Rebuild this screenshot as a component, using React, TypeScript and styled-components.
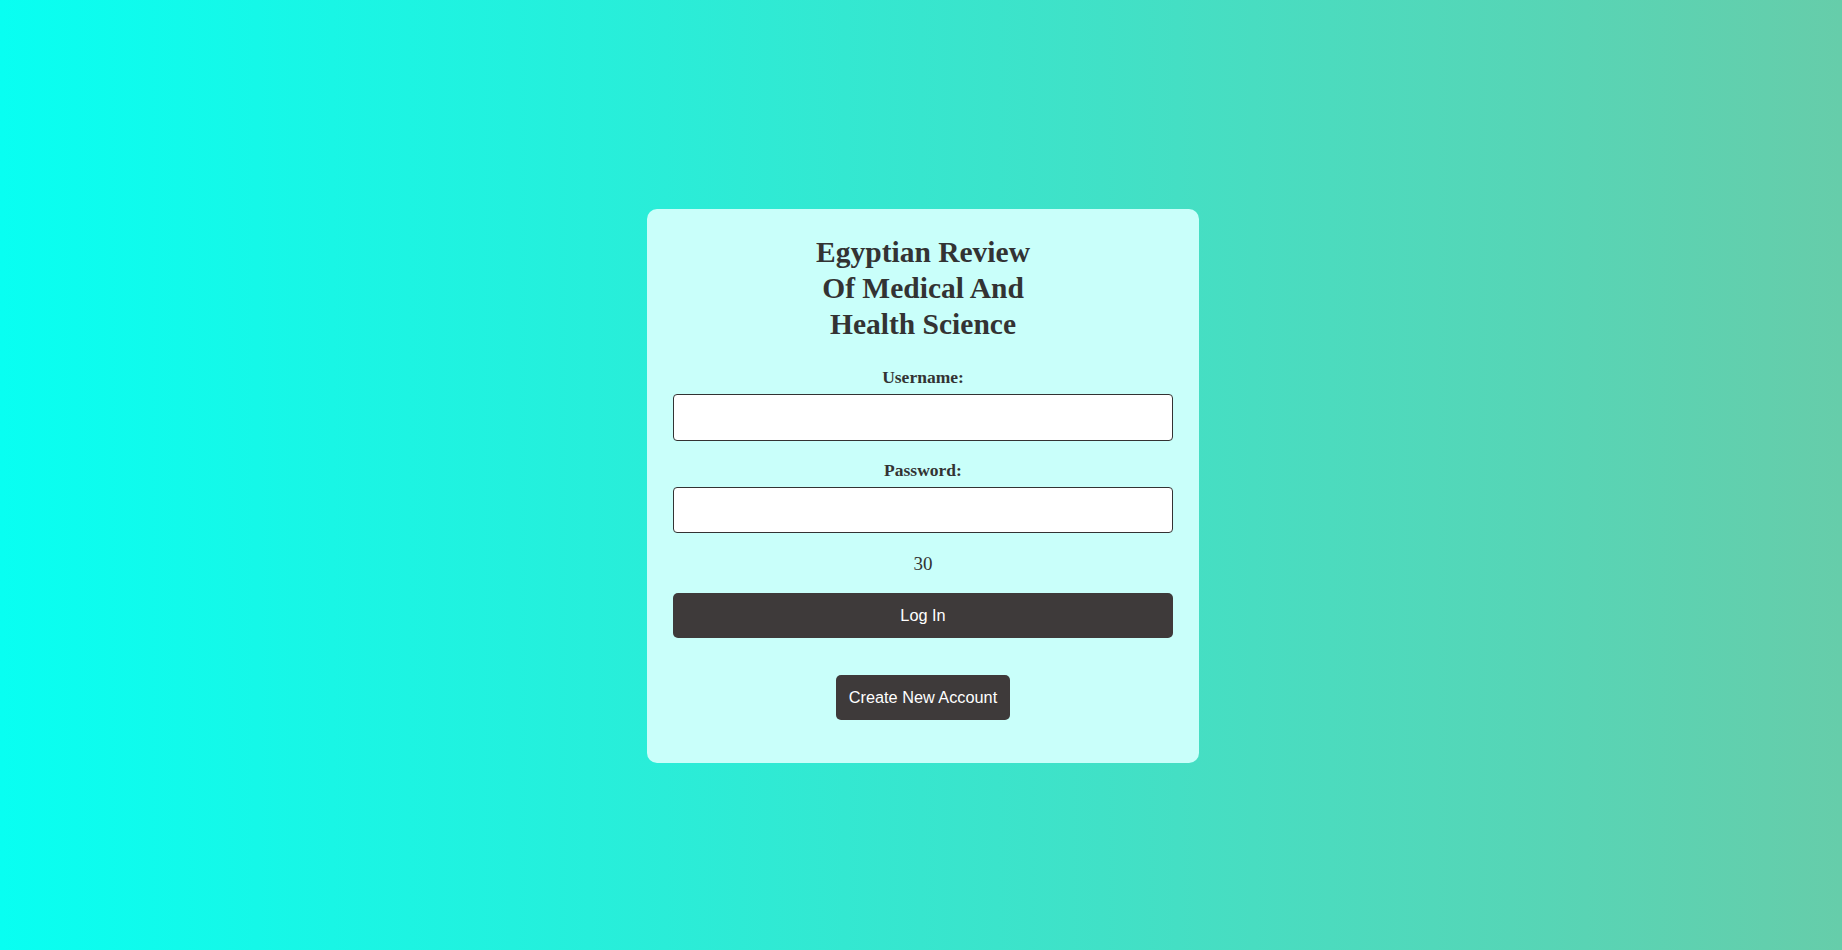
import React from "react";
import styled, { createGlobalStyle } from "styled-components";

const GlobalStyle = createGlobalStyle`
  * { box-sizing: border-box; }
  html, body { margin: 0; padding: 0; }
  body {
    font-family: "Liberation Serif", "Times New Roman", serif;
    color: #333;
  }
`;

const Page = styled.main`
  min-height: 100vh;
  display: flex;
  align-items: center;
  justify-content: center;
  padding: 22.5px 0 0 4px;
  background: linear-gradient(to right, #08fff2, #66cdaa);
`;

const Card = styled.form`
  width: 552px;
  background: #c9fffa;
  border-radius: 10px;
  padding: 25px 26px 43px;
  display: flex;
  flex-direction: column;
  align-items: stretch;
`;

const Title = styled.h1`
  margin: 0 auto;
  max-width: 240px;
  text-align: center;
  font-family: "Liberation Serif", "Times New Roman", serif;
  font-weight: bold;
  font-size: 29.5px;
  line-height: 36px;
  color: #333;
`;

const Field = styled.div<{ $top: number }>`
  display: flex;
  flex-direction: column;
  align-items: stretch;
  gap: 7px;
  margin-top: ${(p) => p.$top}px;
`;

const Label = styled.label`
  text-align: center;
  font-weight: bold;
  font-size: 17.5px;
  line-height: 20px;
  color: #333;
`;

const Input = styled.input<{ $h: number }>`
  height: ${(p) => p.$h}px;
  width: 100%;
  background: #fff;
  border: 1px solid #333;
  border-radius: 4px;
  padding: 0 10px;
  font-size: 16px;
  outline: none;
`;

const Counter = styled.p`
  margin: 20.5px 0 0;
  text-align: center;
  font-size: 19px;
  line-height: 22px;
  color: #333;
`;

const Button = styled.button<{ $wide?: boolean; $top: number }>`
  display: block;
  margin: ${(p) => p.$top}px auto 0;
  width: ${(p) => (p.$wide ? "100%" : "auto")};
  height: 45px;
  padding: 0 12.5px;
  background: #3e3a3a;
  color: #fff;
  border: none;
  border-radius: 5px;
  font-family: "Liberation Sans", Arial, sans-serif;
  font-size: 16.3px;
  cursor: pointer;
`;

export default function App() {
  return (
    <>
      <GlobalStyle />
      <Page>
        <Card onSubmit={(e) => e.preventDefault()}>
          <Title>Egyptian Review Of Medical And Health Science</Title>
          <Field $top={24.7}>
            <Label htmlFor="username">Username:</Label>
            <Input id="username" type="text" $h={47} />
          </Field>
          <Field $top={19}>
            <Label htmlFor="password">Password:</Label>
            <Input id="password" type="password" $h={46} />
          </Field>
          <Counter>30</Counter>
          <Button $wide $top={18.3} type="submit">Log In</Button>
          <Button $top={37} type="button">Create New Account</Button>
        </Card>
      </Page>
    </>
  );
}
